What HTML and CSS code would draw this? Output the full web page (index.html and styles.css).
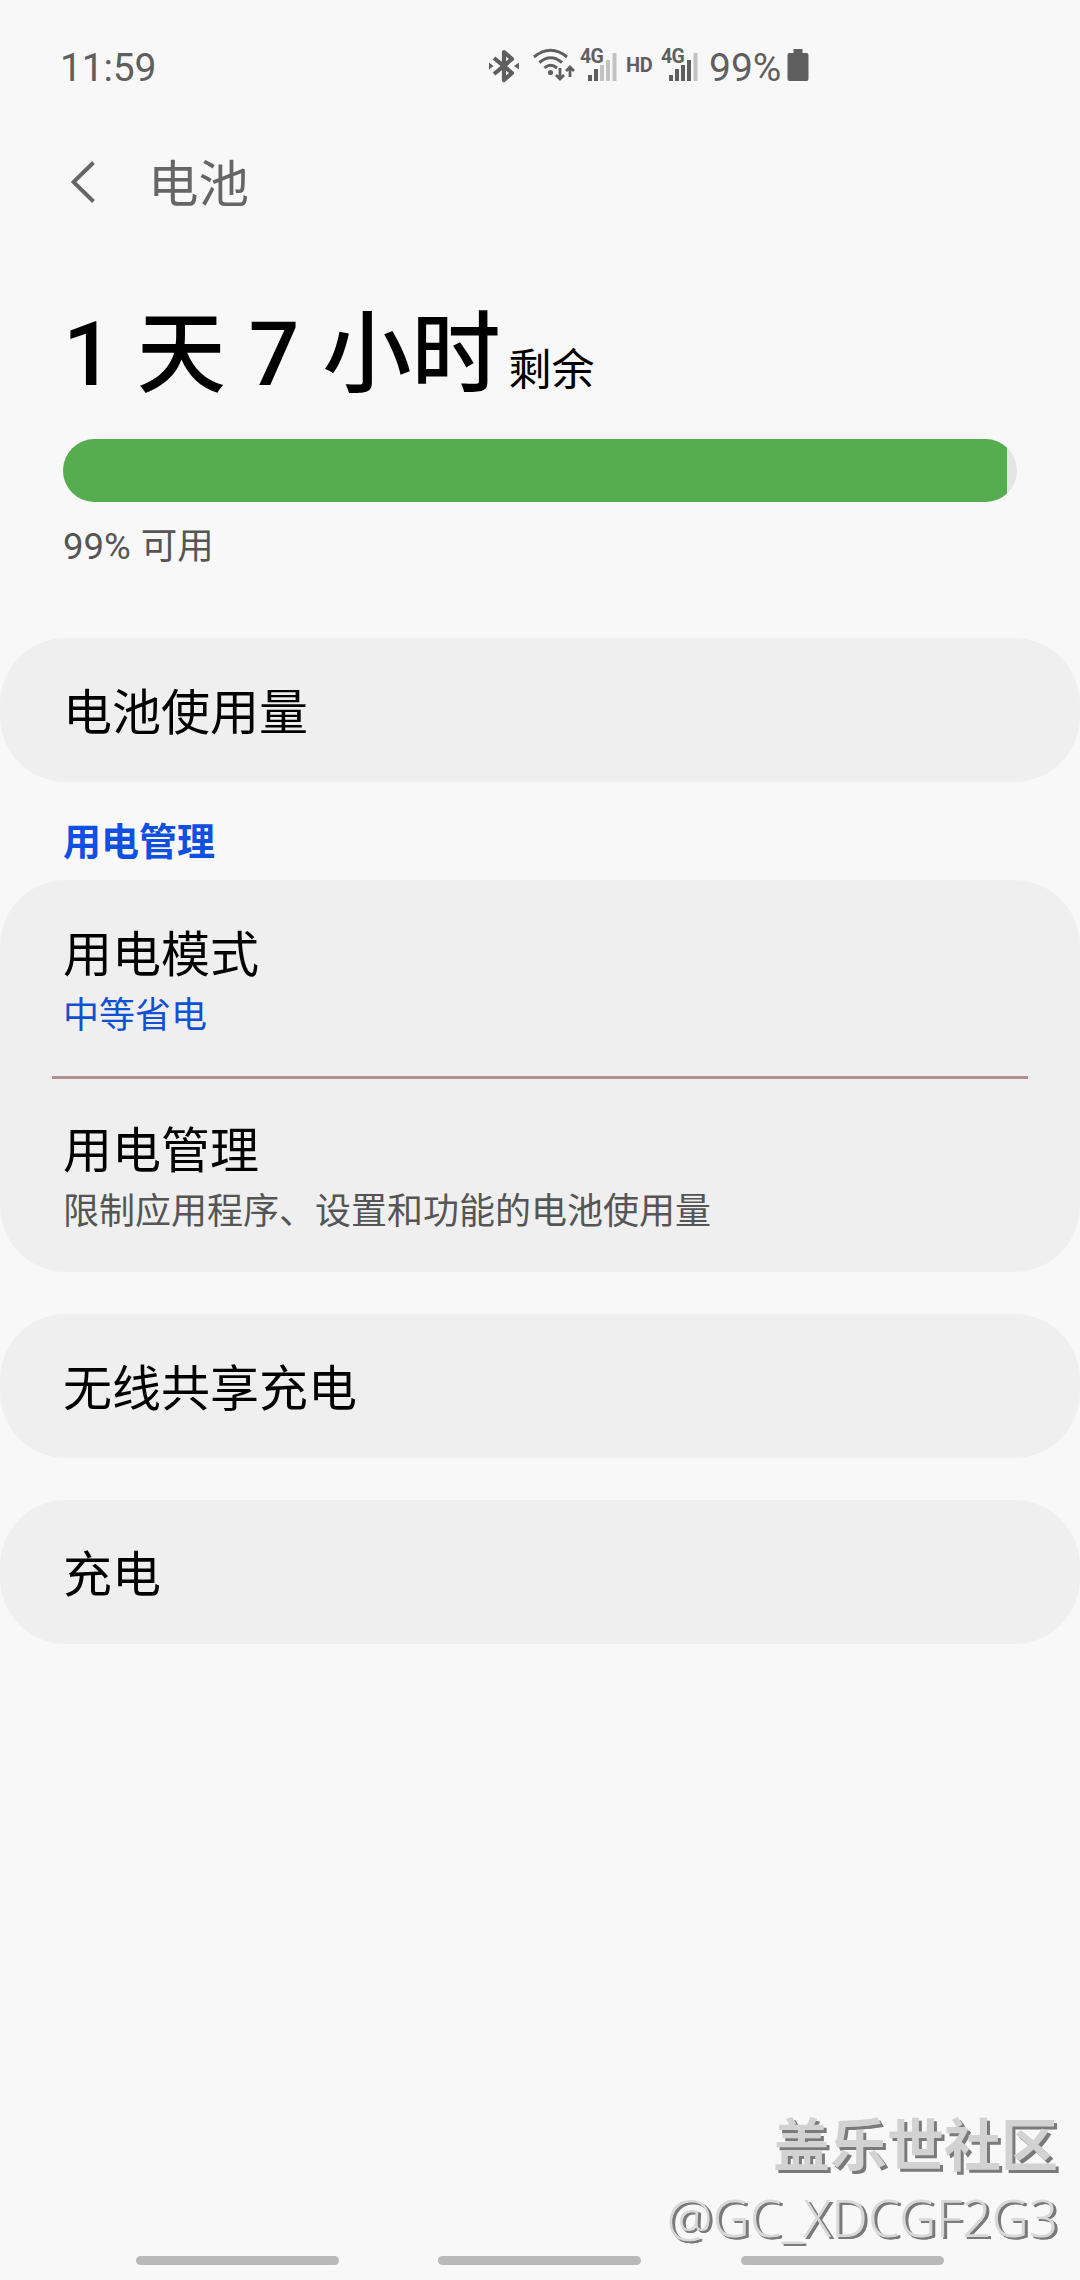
FILE: index.html
```html
<!DOCTYPE html>
<html lang="zh-CN">
<head>
  <meta charset="UTF-8" />
  <meta name="viewport" content="width=device-width, initial-scale=1.0"/>
  <title>电池</title>
  <link rel="stylesheet" href="styles.css">
</head>
<body>
  <div class="status-bar">
    <span class="time">11:59</span>
    <div class="status-icons">
      <!-- bluetooth -->
      <svg class="icon-bt" width="30" height="34" viewBox="0 0 30 34">
        <path d="M5 9 L23 24 L15 31 V3 L23 10 L5 25" fill="none" stroke="#5f5f5f" stroke-width="4.2" stroke-linejoin="round"/>
        <path d="M0 13.5 L4.5 17 L0 20.5 Z M30 13.5 L25 17 L30 20.5 Z" fill="#5f5f5f"/>
      </svg>
      <!-- wifi -->
      <svg class="icon-wifi" width="42" height="34" viewBox="0 0 42 34">
        <g fill="none" stroke="#5f5f5f" stroke-width="3">
          <path d="M1 9 Q17.500 -4.500 34 9"/>
          <path d="M6.500 14.500 Q17.500 5 29 14.500"/>
          <path d="M11.500 20 Q17.500 14.500 24 20"/>
        </g>
        <circle cx="17.500" cy="24.500" r="2.600" fill="#5f5f5f"/>
        <g fill="none" stroke="#5f5f5f" stroke-width="2.800">
          <path d="M27 20 V31 M23 27 L27 31 L31 27"/>
          <path d="M37 29 V18 M33 23 L37 19 L41 23"/>
        </g>
      </svg>
      <div class="signal">
        <span class="net">4G</span>
        <svg width="29" height="30" viewBox="0 0 29 30">
          <path d="M0 24 h4 v6 h-4 Z M6 18 h4 v12 h-4 Z" fill="#5f5f5f"/>
          <path d="M12 14 h4 v16 h-4 Z M18 9 h4 v21 h-4 Z M24.500 2 h4 v28 h-4 Z" fill="#c2c2c2"/>
        </svg>
      </div>
      <span class="hd">HD</span>
      <div class="signal">
        <span class="net">4G</span>
        <svg width="29" height="30" viewBox="0 0 29 30">
          <path d="M0 24 h4 v6 h-4 Z M6 18 h4 v12 h-4 Z M12 14 h4 v16 h-4 Z M18 9 h4 v21 h-4 Z" fill="#5f5f5f"/>
          <path d="M24.500 2 h4 v28 h-4 Z" fill="#c2c2c2"/>
        </svg>
      </div>
      <span class="percent">99%</span>
      <svg class="icon-battery" width="22" height="32" viewBox="0 0 22 32">
        <path d="M6.500 0 h9 v4 h4 q2 0 2 2 v24 q0 2 -2 2 h-17 q-2 0 -2 -2 v-24 q0 -2 2 -2 h4 Z" fill="#5f5f5f"/>
      </svg>
    </div>
  </div>

  <div class="header">
    <svg class="back" width="24" height="42" viewBox="0 0 24 42">
      <path d="M22.500 1.500 L2.500 21 L22.500 40.500" fill="none" stroke="#666" stroke-width="4"/>
    </svg>
    <h1>电池</h1>
  </div>

  <div class="summary">
    <div class="remaining">
      <span class="remaining-time">1 天 7 小时</span>
      <span class="remaining-label">剩余</span>
    </div>
    <div class="bar">
      <div class="bar-fill" style="width: 99%"></div>
    </div>
    <div class="available">99% 可用</div>
  </div>

  <div class="card single">
    <div class="item-title">电池使用量</div>
  </div>

  <h2 class="section-title">用电管理</h2>

  <div class="card group">
    <div class="item">
      <div class="item-title">用电模式</div>
      <div class="item-sub active">中等省电</div>
    </div>
    <div class="item">
      <div class="item-title">用电管理</div>
      <div class="item-sub">限制应用程序、设置和功能的电池使用量</div>
    </div>
  </div>

  <div class="card single">
    <div class="item-title">无线共享充电</div>
  </div>

  <div class="card single">
    <div class="item-title">充电</div>
  </div>

  <div class="nav-bar">
    <span></span>
    <span></span>
    <span></span>
  </div>

  <!-- watermark over the page -->
  <div class="watermark">
    <div class="mark-name">盖乐世社区</div>
    <div class="mark-user">@GC_XDCGF2G3</div>
  </div>
</body>
</html>
```
FILE: styles.css
```css
* {
  box-sizing: border-box;
}

body {
  position: relative;
  display: flex;
  flex-direction: column;
  margin: 0;
  height: 2280px;
  background-color: #f8f8f8;
  font-family: Roboto, "Noto Sans CJK SC", sans-serif;
  color: #000;
  overflow: hidden;
}

/* Status bar */
.status-bar {
  display: flex;
  height: 132px;
  padding: 44px 0 0 60px;
  color: #5f5f5f;
}

.time {
  width: 429px;
  font-size: 39px;
  line-height: 48px;
  letter-spacing: -0.2px;
}

.status-icons {
  display: flex;
  align-items: flex-start;
}

.icon-bt {
  margin: 5px 14px 0 0;
}

.icon-wifi {
  margin: 4px 5px 0 0;
}

.signal {
  position: relative;
  width: 37px;
  height: 37px;
  padding: 7px 0 0 8px;
}

.signal svg {
  display: block;
}

.net {
  position: absolute;
  top: 3px;
  left: 0;
  font-size: 19.5px;
  font-weight: 700;
  line-height: 20px;
  letter-spacing: -0.8px;
}

.hd {
  width: 44px;
  padding: 10px 0 0 9px;
  font-size: 20px;
  font-weight: 700;
  line-height: 23px;
  letter-spacing: -0.4px;
}

.percent {
  width: 89px;
  padding-left: 11px;
  font-size: 39px;
  line-height: 48px;
}

.icon-battery {
  margin-top: 5px;
}

/* Header */
.header {
  display: flex;
  align-items: center;
  height: 100px;
  padding-left: 71px;
  color: #666;
}

.header h1 {
  margin: 6px 0 0 53px;
  font-size: 50.5px;
  font-weight: 400;
  line-height: 60px;
}

/* Remaining time */
.summary {
  height: 406px;
  padding: 68px 63px 0;
}

.remaining {
  display: flex;
  align-items: baseline;
  height: 139px;
  white-space: nowrap;
}

.remaining-time {
  font-size: 89px;
  font-weight: 500;
  line-height: 110px;
  word-spacing: 1px;
}

.remaining-label {
  margin-left: 8px;
  font-size: 43px;
}

.bar {
  height: 63px;
  background: #e4e4e4;
  border-radius: 32px;
  overflow: hidden;
}

.bar-fill {
  height: 100%;
  background: #55ad50;
}

.available {
  margin-top: 23px;
  font-size: 36.5px;
  line-height: 44px;
  word-spacing: 1px;
  color: #555;
}

/* Cards */
.card {
  flex-shrink: 0;
  background: #efefef;
  border-radius: 66px;
}

.single {
  display: flex;
  align-items: center;
  height: 144px;
  margin-bottom: 42px;
  padding: 8px 63px 0;
}

.item-title {
  font-size: 49px;
  line-height: 60px;
}

.section-title {
  height: 56px;
  margin: 0;
  padding-left: 63px;
  font-size: 38px;
  font-weight: 700;
  line-height: 36px;
  color: #0f50e0;
}

.group {
  height: 392px;
  margin-bottom: 42px;
}

.item {
  height: 196px;
  margin: 0 52px;
  padding: 46px 11px 0;
}

.item + .item {
  padding-top: 43px;
  border-top: 3px solid #b58f8f;
}

.item-sub {
  font-size: 36px;
  line-height: 60px;
  color: #555;
}

.active {
  color: #1450d2;
}

/* Bottom navigation */
.nav-bar {
  display: flex;
  gap: 99.4px;
  margin-top: auto;
  padding: 0 0 15px 136px;
}

.nav-bar span {
  width: 203px;
  height: 9px;
  border-radius: 5px;
  background: #b9b9b9;
}

/* Watermark */
.watermark {
  position: absolute;
  right: 22px;
  bottom: 27px;
  color: #d2d2d2;
  font-family: "Noto Sans", "Noto Sans CJK SC", sans-serif;
  text-align: right;
  text-shadow: 3px 3px 0 #7a7a7a;
  white-space: nowrap;
}

.mark-name {
  font-size: 57px;
  font-weight: 700;
  line-height: 74px;
}

/* the light face is nearly lost in the page, its shadow carries the text */
.mark-user {
  font-size: 51.4px;
  font-weight: 300;
  line-height: 72px;
  color: #d8d8d8;
  text-shadow: 2px 2px 0 #7a7a7a, 3px 2px 0 #7a7a7a;
}
```
